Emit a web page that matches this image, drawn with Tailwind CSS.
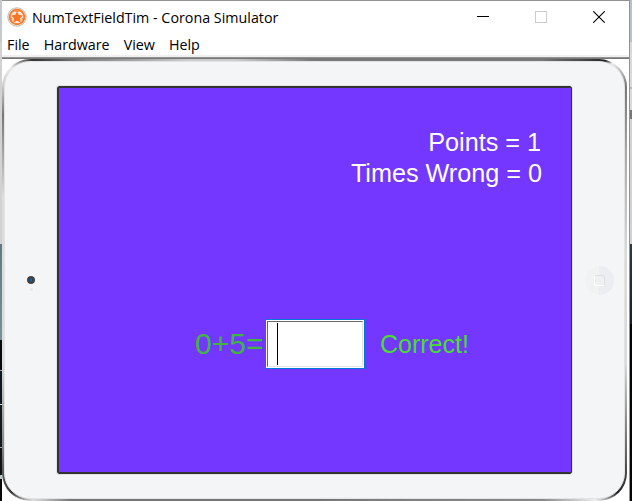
<!DOCTYPE html>
<html lang="en">
<head>
<meta charset="utf-8">
<title>NumTextFieldTim - Corona Simulator</title>
<script src="https://cdn.jsdelivr.net/npm/@tailwindcss/browser@4"></script>
</head>
<body class="w-[632px] h-[501px] overflow-hidden flex bg-white">
<!-- desktop visible left of the window -->
<div class="w-[2px] shrink-0 flex flex-col">
  <div class="h-[42px] bg-[#c5c9cf]"></div>
  <div class="h-[202px] bg-[#d2d2d2]"></div>
  <div class="h-[96px] bg-linear-to-b from-[#607988] to-[#789099]"></div>
  <div class="h-[30px] bg-[#080a0c]"></div>
  <div class="h-px bg-[#a0a6ad]"></div>
  <div class="h-[33px] bg-[#0b1726]"></div>
  <div class="h-px bg-[#e0e4e8]"></div>
  <div class="h-[42px] bg-[#101820]"></div>
  <div class="h-px bg-[#a0a6ad]"></div>
  <div class="h-[27px] bg-[#101112]"></div>
  <div class="h-[4px] bg-[#b9c9cf]"></div>
  <div class="grow bg-[#080808]"></div>
</div>
<!-- window -->
<main class="w-[628px] shrink-0 h-[501px] border-t border-r border-[#929292] bg-white flex flex-col">
  <header class="h-[33px] shrink-0 flex items-center pl-[5px] font-['Open_Sans','Noto_Sans',sans-serif]">
    <svg class="w-5 h-5 shrink-0 -mt-[2px]" viewBox="0 0 20 20">
      <circle cx="10" cy="10" r="9.2" fill="#f7f4f2" stroke="#bcb9b8" stroke-width="1"/>
      <circle cx="10" cy="10" r="7.3" fill="#ffe9da" stroke="#f77b2c" stroke-width="2"/>
      <path d="M10 4.500l1.700 3.200 4.300.700-3 2.900.7 4.200-3.700-1.800-3.700 1.800.7-4.200-3-2.900 4.300-.7z" fill="#f87523"/>
      <path d="M6.500 3.500h7l-3.500 1.900zM3 10l2.500 1.500-.3 3.300zM17 10l-2.500 1.500.3 3.300zM7.800 17l2.200-1.300 2.200 1.300z" fill="#fa8d49"/>
    </svg>
    <h1 class="ml-[5px] w-[260px] text-[14.300px] leading-5 whitespace-nowrap text-black">NumTextFieldTim - Corona Simulator</h1>
    <div class="ml-auto mr-[24px] -mt-[1px] flex items-center gap-[46px]">
      <svg class="w-3 h-3" viewBox="0 0 12 12" shape-rendering="crispEdges"><path d="M0 5.500h12" stroke="#000"/></svg>
      <svg class="w-3 h-3" viewBox="0 0 12 12"><rect x=".5" y=".5" width="11" height="11" fill="none" stroke="#ccc"/></svg>
      <svg class="w-3 h-3" viewBox="0 0 12 12"><path d="M.3.300l11.400 11.400M11.700.300L.3 11.700" stroke="#000" stroke-width="1.100"/></svg>
    </div>
  </header>
  <nav class="h-[21px] shrink-0 flex items-center pl-[5px] gap-[14px] text-[14.300px] leading-5 text-black font-['Open_Sans','Noto_Sans',sans-serif]">
    <span>File</span><span>Hardware</span><span>View</span><span>Help</span>
  </nav>
  <div class="h-[2px] shrink-0 bg-[#f0f0f0]"></div>
  <div class="h-[2px] shrink-0 bg-linear-to-b from-[#a0a0a0] to-[#696969]"></div>
  <!-- tablet -->
  <section class="w-[625px] h-[442px] shrink-0 rounded-[28px] p-[2px] bg-[conic-gradient(from_0deg_at_50%_50%,#777_0deg,#777_46deg,#444_51deg,#222_53deg,#eee_54deg,#777_58deg,#aaa_68deg,#d8dadb_85deg,#d8dadb_105deg,#666_119deg,#222_125deg,#eee_128deg,#888_134deg,#777_180deg,#777_228deg,#ddd_232deg,#333_235deg,#888_242deg,#ddd_255deg,#ddd_285deg,#777_298deg,#ccc_302deg,#eee_305deg,#333_308deg,#888_314deg,#ccc_330deg,#ccc_340deg,#777_360deg)]">
    <div class="h-full w-full rounded-[26px] bg-[#f4f5f7] border border-[#e2e3e4] flex items-center pl-[20px]">
      <div class="w-[12px] h-[16px] shrink-0 mt-[7px] flex flex-col items-center gap-1">
        <div class="w-[8px] h-[8px] shrink-0 rounded-full bg-[radial-gradient(#0d66ba_10%,#34424f_35%,#414141_65%,#777_75%)]"></div>
        <div class="w-[3px] h-[3px] shrink-0 rounded-full bg-[#e8e9eb]"></div>
      </div>
      <div class="ml-[20px] w-[515px] h-[388px] shrink-0 bg-[#7337ff] border-l-2 border-t-2 border-b-2 border-r border-[#333] rounded-[2px] outline outline-[#e2e3e5] flex flex-col text-white font-['Liberation_Sans',Arial,sans-serif]">
        <div class="mt-[39px] mr-[29px] text-right text-[25.200px] leading-[31px] whitespace-nowrap">
          <div class="mr-px">Points = 1</div>
          <div>Times Wrong = 0</div>
        </div>
        <div class="mt-[130px] ml-[136px] flex items-center">
          <span class="w-[70px] text-[30px] leading-[48px] text-[#3fb63f] whitespace-nowrap">0+5=</span>
          <div class="w-[100px] h-[50px] shrink-0 border border-[#0078d7] bg-white p-px">
            <div class="h-full border-l border-t border-r border-b border-l-[#696969] border-t-[#696969] border-r-[#e3e3e3] border-b-[#e3e3e3] pl-[9px] pt-px"><div class="w-px h-[42px] bg-black"></div></div>
          </div>
          <span class="ml-[15px] text-[25px] leading-[48px] text-[#48df29]">Correct!</span>
        </div>
      </div>
      <div class="ml-[13px] w-[29px] h-[29px] shrink-0 rounded-full bg-linear-to-r from-[#f1f2f4] from-50% to-[#ecedf1] to-50% flex items-center justify-center">
        <div class="w-[11px] h-[11px] rounded-[3px] border border-t-[#dfe0e2] border-r-[#dfe0e2] border-b-white border-l-white bg-[#eff0f2]"></div>
      </div>
    </div>
  </section>
</main>
<!-- desktop visible right of the window -->
<div class="w-[2px] shrink-0 flex flex-col">
  <div class="h-[42px] bg-[#b8c2cc]"></div>
  <div class="h-[45px] bg-[#dadada]"></div>
  <div class="h-[2px] bg-[#b8b8b8]"></div>
  <div class="h-[21px] bg-[#dadada]"></div>
  <div class="h-[9px] bg-[#777]"></div>
  <div class="h-[125px] bg-[#d2d2d2]"></div>
  <div class="h-[80px] bg-linear-to-b from-[#2d3a40] to-[#172024]"></div>
  <div class="grow bg-[#050505]"></div>
</div>
</body>
</html>
